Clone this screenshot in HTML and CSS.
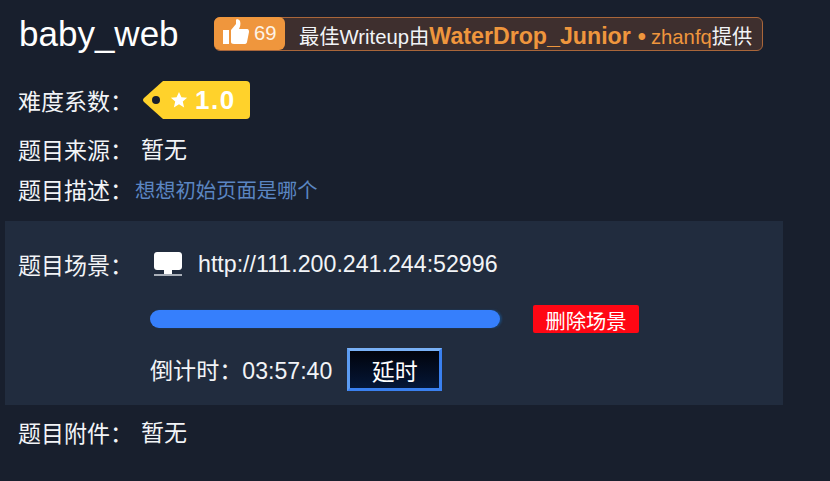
FILE: index.html
```html
<!doctype html>
<html>
  <head>
    <meta charset="utf-8">
    <link rel="stylesheet" href="styles.css">
  </head>
  <body>
    <div class="head-row">
      <h1 class="title">baby_web</h1>
      <div class="wp-badge">
        <span class="wp-like">
          <svg class="thumb" viewBox="0 0 26 26"><path d="M0 11h6v14H0zM8 11l5-6V1c0-1 3-1 4 1 1 3 0 6-1 8h8c2 0 2 2 2 3l-2 10c-.3 1.500-1 2-3 2H11c-2 0-3-1-3-2z"/></svg>
          <span>69</span>
        </span>
        <span class="wp-text">最佳Writeup由<b class="wp-team">WaterDrop_Junior</b><b class="wp-dot">•</b><span class="wp-user">zhanfq</span>提供</span>
      </div>
    </div>

    <div class="row row-level">
      <span class="label">难度系数：</span>
      <span class="tag">
        <svg class="star" viewBox="0 0 20 20"><path d="M10 1l2.700 6 6.300.6-4.800 4.200 1.500 6.400L10 14.800 4.300 18.200l1.500-6.400L1 7.600 7.300 7z"/></svg>
        1.0
      </span>
    </div>

    <div class="row row-source">
      <span class="label">题目来源：</span>
      <span class="value">暂无</span>
    </div>

    <div class="row row-desc">
      <span class="label">题目描述：</span>
      <span class="desc">想想初始页面是哪个</span>
    </div>

    <div class="scene">
      <div class="scene-addr">
        <span class="label">题目场景：</span>
        <svg class="monitor" viewBox="0 0 28 24"><path d="M3 0h22c1.500 0 3 1 3 3v12c0 2-1.500 3-3 3H3c-1.500 0-3-1-3-3V3c0-2 1.500-3 3-3zM10 18h8v4h-8z"/><path class="monitor-base" d="M0 22h28v2H0z"/></svg>
        <span class="url">http://111.200.241.244:52996</span>
      </div>
      <div class="scene-bar">
        <div class="progress"></div>
        <button class="btn-del">删除场景</button>
      </div>
      <div class="scene-time">
        <span class="countdown">倒计时：03:57:40</span>
        <button class="btn-delay">延时</button>
      </div>
    </div>

    <div class="row row-file">
      <span class="label">题目附件：</span>
      <span class="value">暂无</span>
    </div>
  </body>
</html>
```

FILE: styles.css
```css
body {
  margin: 0;
  height: 481px;
  overflow: hidden;
  background: #181f2d;
  color: #f2f4f7;
  font-family: "Liberation Sans", "Noto Sans CJK SC", sans-serif;
  font-size: 23px;
}

.head-row {
  display: flex;
  align-items: center;
  padding: 16px 0 0 19px;
  height: 36px;
}

.title {
  margin: 0;
  width: 195px;
  flex: none;
  font-size: 35px;
  font-weight: normal;
  color: #fff;
}

.wp-badge {
  display: flex;
  align-items: center;
  width: 549px;
  height: 34px;
  box-sizing: border-box;
  background: #3e2f2e;
  border: 1px solid #a9663a;
  border-radius: 6px;
  font-size: 20.3px;
}

.wp-like {
  display: flex;
  align-items: center;
  width: 71px;
  height: 33px;
  margin: -1px 0 0 -1px;
  box-sizing: border-box;
  padding-left: 9px;
  background: #ef963d;
  border-radius: 6px;
  color: #fdf3e6;
}

.thumb {
  width: 26px;
  height: 26px;
  margin: -4px 5px 0 0;
  fill: #fff;
}

.wp-text {
  margin-left: 14px;
  padding-top: 1px;
  white-space: nowrap;
}

.wp-team {
  font-size: 23.2px;
  color: #ef963d;
}

.wp-dot {
  margin: 0 5px 0 7px;
  font-size: 23.2px;
  color: #ef963d;
}

.wp-user {
  color: #ef963d;
}

.row {
  display: flex;
  align-items: center;
  padding-left: 18px;
}

.row-level {
  margin-top: 28px;
  height: 40px;
}

.row-source {
  margin-top: 14px;
  height: 30px;
}

.row-desc {
  margin-top: 10px;
  height: 30px;
}

.row-file {
  margin-top: 12px;
  height: 30px;
}

.label {
  width: 123px;
  flex: none;
}

.row-level .label {
  width: 125px;
}

.row-desc .label {
  width: 117px;
}

.value {
  margin-top: -3px;
}

.desc {
  color: #5b86c2;
  font-size: 20.3px;
}

.tag {
  display: flex;
  align-items: center;
  position: relative;
  width: 107px;
  height: 38px;
  box-sizing: border-box;
  padding-left: 27px;
  background: #ffd22b;
  clip-path: path("M20 0H103Q107 0 107 4V34Q107 38 103 38H20L1 21Q-1 19 1 17Z");
  color: #fff;
  font-size: 26px;
  font-weight: bold;
  letter-spacing: 1.500px;
}

.tag::before {
  content: "";
  position: absolute;
  left: 9px;
  top: 15px;
  width: 8px;
  height: 8px;
  border-radius: 50%;
  background: #181f2d;
}

.star {
  width: 18px;
  height: 18px;
  margin-right: 7px;
  fill: #fff;
}

.scene {
  margin: 17px 47px 0 5px;
  height: 184px;
  background: #212c3e;
  padding-left: 13px;
}

.scene-addr {
  display: flex;
  align-items: center;
  padding-top: 3px;
  height: 80px;
}

.monitor {
  width: 28px;
  height: 24px;
  margin: 0 16px 0 13px;
  fill: #fff;
}

.monitor-base {
  fill: #a9afb8;
}

.url {
  font-size: 23.2px;
}

.scene-bar {
  display: flex;
  align-items: center;
  padding-left: 132px;
  height: 30px;
}

.progress {
  width: 350px;
  height: 18px;
  border-radius: 9px;
  background: #367ffc;
  box-shadow: 2px 0 2px #1c4470;
}

.btn-del {
  margin-left: 33px;
  width: 106px;
  height: 28px;
  padding: 0;
  border: 0;
  border-radius: 2px;
  background: #ff0714;
  color: #fff;
  font-family: inherit;
  font-size: 20.3px;
}

.scene-time {
  display: flex;
  align-items: center;
  padding-left: 132px;
  margin-top: 14px;
  height: 43px;
}

.countdown {
  margin-top: -2px;
  font-size: 23.100px;
}

.btn-delay {
  margin-left: 15px;
  width: 95px;
  height: 43px;
  padding: 0;
  box-sizing: border-box;
  border: 3px solid #3a80ef;
  border-top-color: #79b0f5;
  border-left-color: #5c9cf2;
  background: linear-gradient(#01030c, #051737);
  color: #fff;
  font-family: inherit;
  font-size: 23px;
}
```
